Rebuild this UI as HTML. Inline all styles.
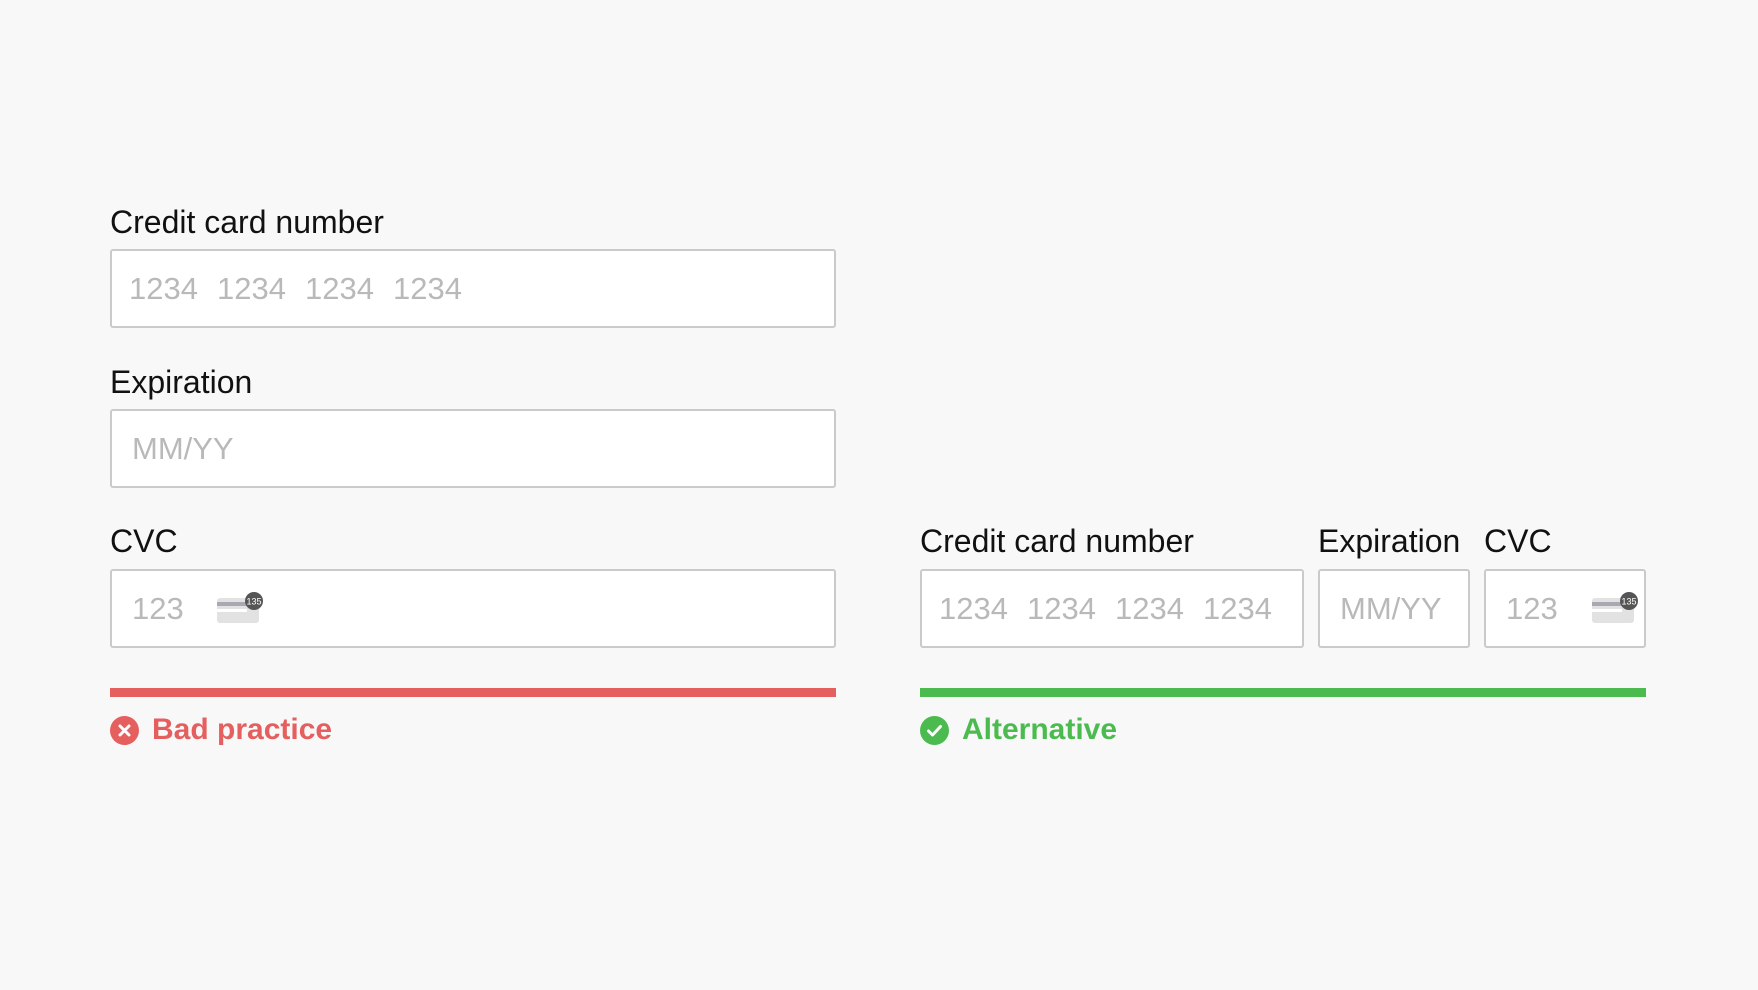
<!DOCTYPE html>
<html><head><meta charset="utf-8"><style>
html,body{margin:0;padding:0;}
body{width:1758px;height:990px;background:#f8f8f8;position:relative;overflow:hidden;font-family:"Liberation Sans",Arial,sans-serif;}
.lbl{position:absolute;font-size:32px;line-height:34px;color:#111;white-space:nowrap;}
.box{position:absolute;background:#fff;border:2px solid #cacaca;border-radius:3px;box-sizing:border-box;}
.ph{position:absolute;top:50%;transform:translateY(-50%);font-size:31px;line-height:36px;color:#b9b9b9;white-space:nowrap;}
.bar{position:absolute;height:9px;}
.res{position:absolute;font-size:30px;font-weight:bold;line-height:34px;white-space:nowrap;}
.ic{position:absolute;width:29px;height:29px;border-radius:50%;}
</style></head><body>

<div class="lbl" style="left:110px;top:205px">Credit card number</div>
<div class="box" style="left:110px;top:249px;width:726px;height:79px">
  <span class="ph" style="left:17px">1234</span><span class="ph" style="left:105px">1234</span><span class="ph" style="left:193px">1234</span><span class="ph" style="left:281px">1234</span>
</div>

<div class="lbl" style="left:110px;top:365px">Expiration</div>
<div class="box" style="left:110px;top:409px;width:726px;height:79px">
  <span class="ph" style="left:20px">MM/YY</span>
</div>

<div class="lbl" style="left:110px;top:524px">CVC</div>
<div class="box" style="left:110px;top:569px;width:726px;height:79px">
  <span class="ph" style="left:20px">123</span>
  <svg style="position:absolute;left:104px;top:21px" width="48" height="32" viewBox="0 0 48 32">
    <rect x="1" y="6" width="42" height="25" rx="3" fill="#e2e2e2"/>
    <rect x="1" y="10" width="42" height="4" fill="#a9a9b2"/>
    <rect x="1" y="17" width="30" height="3" fill="#fff"/>
    <circle cx="38" cy="9" r="9" fill="#555"/>
    <text x="38" y="12.5" font-size="9" fill="#fff" text-anchor="middle" font-family="Liberation Sans,sans-serif">135</text>
  </svg>
</div>

<div class="bar" style="left:110px;top:688px;width:726px;background:#e55f5f"></div>
<div class="ic" style="left:110px;top:716px;background:#e55f5f">
  <svg width="29" height="29" viewBox="0 0 29 29"><path d="M10 10L19 19M19 10L10 19" stroke="#fff" stroke-width="3" stroke-linecap="round"/></svg>
</div>
<div class="res" style="left:152px;top:713px;color:#e55f5f">Bad practice</div>

<div class="lbl" style="left:920px;top:524px">Credit card number</div>
<div class="lbl" style="left:1318px;top:524px">Expiration</div>
<div class="lbl" style="left:1484px;top:524px">CVC</div>

<div class="box" style="left:920px;top:569px;width:384px;height:79px">
  <span class="ph" style="left:17px">1234</span><span class="ph" style="left:105px">1234</span><span class="ph" style="left:193px">1234</span><span class="ph" style="left:281px">1234</span>
</div>
<div class="box" style="left:1318px;top:569px;width:152px;height:79px">
  <span class="ph" style="left:20px">MM/YY</span>
</div>
<div class="box" style="left:1484px;top:569px;width:162px;height:79px">
  <span class="ph" style="left:20px">123</span>
  <svg style="position:absolute;left:105px;top:21px" width="48" height="32" viewBox="0 0 48 32">
    <rect x="1" y="6" width="42" height="25" rx="3" fill="#e2e2e2"/>
    <rect x="1" y="10" width="42" height="4" fill="#a9a9b2"/>
    <rect x="1" y="17" width="30" height="3" fill="#fff"/>
    <circle cx="38" cy="9" r="9" fill="#555"/>
    <text x="38" y="12.5" font-size="9" fill="#fff" text-anchor="middle" font-family="Liberation Sans,sans-serif">135</text>
  </svg>
</div>

<div class="bar" style="left:920px;top:688px;width:726px;background:#4cbb4f"></div>
<div class="ic" style="left:920px;top:716px;background:#4cbb4f">
  <svg width="29" height="29" viewBox="0 0 29 29"><path d="M8.5 15L12.5 19L20.5 10.5" stroke="#fff" stroke-width="3" fill="none" stroke-linecap="round" stroke-linejoin="round"/></svg>
</div>
<div class="res" style="left:962px;top:713px;color:#4cbb4f">Alternative</div>

</body></html>
